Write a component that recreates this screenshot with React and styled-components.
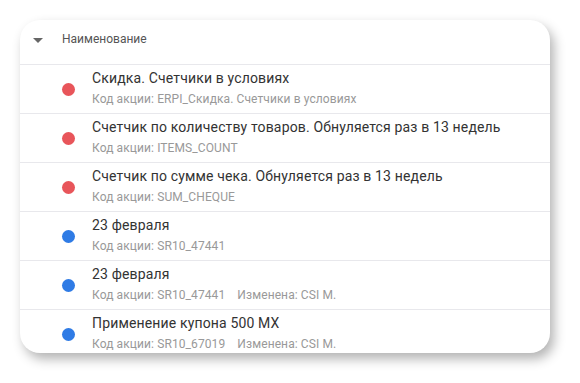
import styled, { createGlobalStyle } from "styled-components";

const GlobalStyle = createGlobalStyle`
  body {
    margin: 0;
    background: #ffffff;
    font-family: Roboto, "Noto Sans", sans-serif;
  }
`;

const promos = [
  { color: "red", title: "Скидка. Счетчики в условиях", code: "ERPI_Скидка. Счетчики в условиях" },
  { color: "red", title: "Счетчик по количеству товаров. Обнуляется раз в 13 недель", code: "ITEMS_COUNT" },
  { color: "red", title: "Счетчик по сумме чека. Обнуляется раз в 13 недель", code: "SUM_CHEQUE" },
  { color: "blue", title: "23 февраля", code: "SR10_47441" },
  { color: "blue", title: "23 февраля", code: "SR10_47441", changed: "CSI M." },
  { color: "blue", title: "Применение купона 500 МХ", code: "SR10_67019", changed: "CSI M." },
];

export default function App() {
  return (
    <>
      <GlobalStyle />
      <Card>
        <Header>
          <Caret />
          <HeaderTitle>Наименование</HeaderTitle>
        </Header>
        {promos.map((p, i) => (
          <Row key={i}>
            <Dot $color={p.color} />
            <Info>
              <Title>{p.title}</Title>
              <Meta>
                <span>Код акции: {p.code}</span>
                {p.changed && <span>Изменена: {p.changed}</span>}
              </Meta>
            </Info>
          </Row>
        ))}
      </Card>
    </>
  );
}

const Card = styled.div`
  margin: 20px;
  width: 530px;
  height: 333px;
  background: #fff;
  border-radius: 20px;
  overflow: hidden;
  box-shadow: 4px 6px 12px rgba(0, 0, 0, 0.3);
`;

const Header = styled.div`
  height: 45px;
  display: flex;
  align-items: center;
  padding-left: 13px;
  padding-bottom: 6px;
  box-sizing: border-box;
  border-bottom: 1px solid #e8e8ec;
`;

const Caret = styled.div`
  width: 0;
  height: 0;
  border-left: 5px solid transparent;
  border-right: 5px solid transparent;
  border-top: 5px solid #666;
  margin-right: 19px;
  margin-top: 2px;
`;

const HeaderTitle = styled.span`
  font-size: 12px;
  color: #555;
`;

const Row = styled.div`
  height: 48px;
  display: flex;
  align-items: center;
  padding-left: 42px;
  border-bottom: 1px solid #e8e8ec;
`;

const Dot = styled.div`
  width: 13px;
  height: 13px;
  border-radius: 50%;
  flex-shrink: 0;
  background: ${(p) => (p.$color === "red" ? "#e8555a" : "#2f7be5")};
  margin-right: 17px;
`;

const Info = styled.div`
  align-self: flex-start;
  padding-top: 4px;
  display: flex;
  flex-direction: column;
  gap: 4px;
`;

const Title = styled.div`
  font-size: 14px;
  line-height: 18px;
  letter-spacing: 0.15px;
  color: #333;
`;

const Meta = styled.div`
  display: flex;
  gap: 12px;
  font-size: 12px;
  line-height: 16px;
  letter-spacing: 0.1px;
  color: #999;
`;
